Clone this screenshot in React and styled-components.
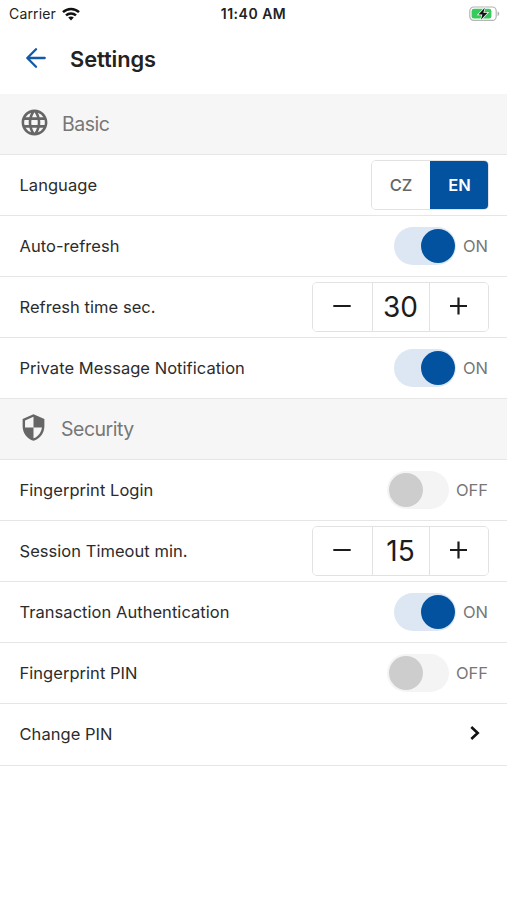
import React, { useState } from 'react'
import styled, { createGlobalStyle } from 'styled-components'
import { MdLanguage, MdSecurity } from 'react-icons/md'

const rows = {
  basic: [
    { label: 'Language', type: 'choice', options: ['CZ', 'EN'], value: 'EN' },
    { label: 'Auto-refresh', type: 'toggle', value: true },
    { label: 'Refresh time sec.', type: 'stepper', value: 30 },
    { label: 'Private Message Notification', type: 'toggle', value: true },
  ],
  security: [
    { label: 'Fingerprint Login', type: 'toggle', value: false },
    { label: 'Session Timeout min.', type: 'stepper', value: 15 },
    { label: 'Transaction Authentication', type: 'toggle', value: true },
    { label: 'Fingerprint PIN', type: 'toggle', value: false },
    { label: 'Change PIN', type: 'link' },
  ],
}

function StatusBar() {
  return (
    <StatusWrapper>
      <Carrier>
        Carrier
        <svg width="18" height="14" viewBox="0 0 18 14" fill="none" stroke="#111" strokeWidth="2.5">
          <path d="M1 5.1C5.5.8 12.5.8 17 5.1" />
          <path d="M4 8.4C6.8 5.8 11.2 5.8 14 8.4" />
          <path d="M9 13.4L6.2 10.5C7.8 9.1 10.2 9.1 11.8 10.5Z" fill="#111" stroke="none" />
        </svg>
      </Carrier>
      <Clock>11:40 AM</Clock>
      <Battery>
        <svg width="31" height="16" viewBox="0 0 31 16">
          <rect x="0.8" y="1" width="26.4" height="13.4" rx="4" fill="#fff" stroke="#b4b4b4" strokeWidth="1.2" />
          <rect x="2.6" y="2.8" width="19.8" height="9.8" rx="2.4" fill="#35cb5b" />
          <path d="M28.6 5.3v4.8c1-.4 1.6-1.3 1.6-2.4s-.6-2-1.6-2.4z" fill="#adadad" />
          <path d="M15.8 1.8L9.4 8.5h4l-1.5 5.2 6.6-7h-4.2z" fill="#111" stroke="#fff" strokeWidth="1.4" paintOrder="stroke" />
        </svg>
      </Battery>
    </StatusWrapper>
  )
}

function Toggle({ initial }) {
  const [on, setOn] = useState(initial)
  return (
    <ToggleWrapper onClick={() => setOn(!on)}>
      <Track $on={on}>
        <Knob $on={on} />
      </Track>
      <ToggleText>{on ? 'ON' : 'OFF'}</ToggleText>
    </ToggleWrapper>
  )
}

function Stepper({ initial }) {
  const [value, setValue] = useState(initial)
  return (
    <ButtonGroup>
      <StepButton onClick={() => setValue(value - 1)}>
        <svg width="18" height="18" viewBox="0 0 18 18" stroke="#1c1c1c" strokeWidth="2.2">
          <path d="M0.3 9h17.4" />
        </svg>
      </StepButton>
      <StepValue>{value}</StepValue>
      <StepButton onClick={() => setValue(value + 1)}>
        <svg width="18" height="18" viewBox="0 0 18 18" stroke="#1c1c1c" strokeWidth="2.2">
          <path d="M0 9h17M8.5 0.5v17" />
        </svg>
      </StepButton>
    </ButtonGroup>
  )
}

function Choice({ options, initial }) {
  const [active, setActive] = useState(initial)
  return (
    <ButtonGroup>
      {options.map(option => (
        <ChoiceButton key={option} $active={option === active} onClick={() => setActive(option)}>
          {option}
        </ChoiceButton>
      ))}
    </ButtonGroup>
  )
}

function Control({ row }) {
  if (row.type === 'toggle') return <Toggle initial={row.value} />
  if (row.type === 'stepper') return <Stepper initial={row.value} />
  if (row.type === 'choice') return <Choice options={row.options} initial={row.value} />
  return (
    <Chevron width="10" height="14" viewBox="0 0 10 14" fill="none" stroke="#111" strokeWidth="2.6">
      <path d="M1.3 1L7.7 7 1.3 13" />
    </Chevron>
  )
}

function Section({ icon, title, titleGap, items }) {
  return (
    <section>
      <SectionHeader $gap={titleGap}>
        {icon}
        <h2>{title}</h2>
      </SectionHeader>
      {items.map(row => (
        <Row key={row.label}>
          <Label>{row.label}</Label>
          <Control row={row} />
        </Row>
      ))}
    </section>
  )
}

export default function App() {
  return (
    <Screen>
      <GlobalStyle />
      <StatusBar />
      <TitleBar>
        <svg width="20" height="20" viewBox="0 0 20 20" fill="none" stroke="#1359a5" strokeWidth="2.3" strokeLinecap="round" strokeLinejoin="round">
          <path d="M18.7 10H1.5M10 1.3L1.3 10 10 18.7" />
        </svg>
        <h1>Settings</h1>
      </TitleBar>
      <Section icon={<MdLanguage size={31} />} title="Basic" titleGap="12px" items={rows.basic} />
      <Section icon={<MdSecurity size={29} />} title="Security" titleGap="13px" items={rows.security} />
    </Screen>
  )
}

const GlobalStyle = createGlobalStyle`
  * {
    box-sizing: border-box;
  }
  body {
    margin: 0;
    background: #fff;
    font-family: Inter, "Liberation Sans", sans-serif;
  }
  button {
    font-family: inherit;
    cursor: pointer;
  }
`

const Screen = styled.main`
  min-height: 900px;
  background: #fff;
  color: #2c2c2c;
`

const StatusWrapper = styled.header`
  display: grid;
  grid-template-columns: 1fr auto 1fr;
  align-items: center;
  height: 27px;
  padding: 0 7px 0 9px;
  font-size: 14px;
  color: #222;
`

const Carrier = styled.div`
  display: flex;
  align-items: center;
  gap: 6px;
  letter-spacing: 0.15px;
`

const Clock = styled.div`
  margin-right: 2px;
  font-size: 14px;
  font-weight: 600;
  letter-spacing: 0.5px;
`

const Battery = styled.div`
  display: flex;
  justify-content: flex-end;
`

const TitleBar = styled.div`
  display: flex;
  align-items: center;
  gap: 24px;
  height: 67px;
  padding: 0 26px 5px;

  h1 {
    margin: 2px 0 0;
    font-size: 21.8px;
    font-weight: 600;
    letter-spacing: -0.05px;
    color: #222;
  }
`

const SectionHeader = styled.div`
  display: flex;
  align-items: center;
  gap: ${props => props.$gap};
  height: 61.06px;
  padding: 0 19px 3px;
  background: #f6f6f6;
  border-bottom: 1px solid #e6e6e6;
  color: #666;

  h2 {
    margin: 2px 0 0;
    font-size: 19.5px;
    font-weight: 400;
    letter-spacing: -0.5px;
    color: #777;
  }
`

const Row = styled.div`
  display: flex;
  align-items: center;
  justify-content: space-between;
  height: 61.06px;
  padding: 0 18px 0 19.5px;
  border-bottom: 1px solid #e6e6e6;
`

const Label = styled.span`
  font-size: 16.5px;
  letter-spacing: 0.04px;
`

const ToggleWrapper = styled.div`
  display: flex;
  align-items: center;
  gap: 7px;
  margin-right: 1px;
  cursor: pointer;
`

const Track = styled.div`
  display: flex;
  justify-content: ${props => (props.$on ? 'flex-end' : 'flex-start')};
  width: 62px;
  height: 38px;
  padding: 2px 1px 2px 2px;
  border-radius: 19px;
  background: ${props => (props.$on ? '#dce7f3' : '#f4f4f4')};
`

const Knob = styled.div`
  width: 34px;
  height: 34px;
  border-radius: 50%;
  background: ${props => (props.$on ? '#03529f' : '#cdcdcd')};
`

const ToggleText = styled.span`
  font-size: 16.5px;
  color: #777;
`

const ButtonGroup = styled.div`
  display: flex;
  height: 50px;
  border: 1px solid #e2e2e2;
  border-radius: 5px;
  overflow: hidden;
`

const StepButton = styled.button`
  display: flex;
  align-items: center;
  justify-content: center;
  width: 58.5px;
  padding: 0 0 2px;
  border: 0;
  background: #fff;
`

const StepValue = styled.div`
  display: flex;
  align-items: center;
  justify-content: center;
  width: 58px;
  border: solid #e2e2e2;
  border-width: 0 1px;
  font-size: 28px;
  color: #1c1c1c;
`

const ChoiceButton = styled.button`
  width: ${props => (props.$active ? '59px' : '58px')};
  margin: ${props => (props.$active ? '-1px -1px -1px 0' : '0')};
  padding: 0;
  border: 0;
  font-size: 16.5px;
  font-weight: ${props => (props.$active ? 600 : 500)};
  background: ${props => (props.$active ? '#03529f' : '#fff')};
  color: ${props => (props.$active ? '#fff' : '#666')};
`

const Chevron = styled.svg`
  margin: 0 9px 2px 0;
`
